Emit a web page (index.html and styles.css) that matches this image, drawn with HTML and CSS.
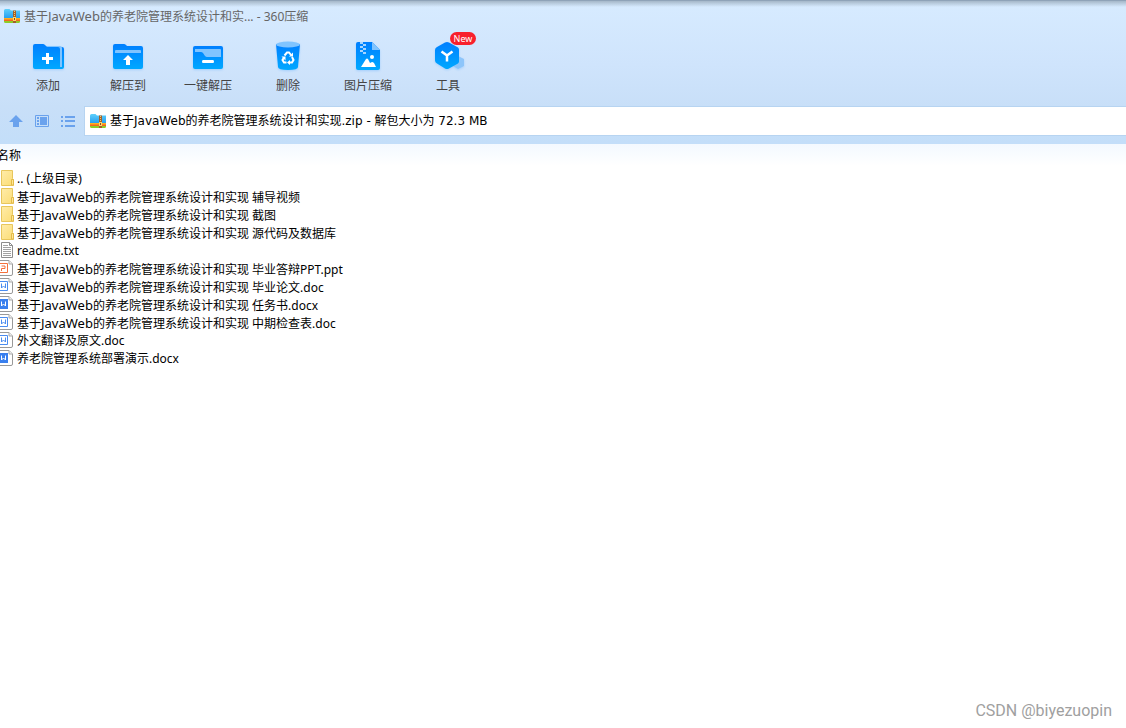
FILE: index.html
```html
<!DOCTYPE html>
<html lang="zh-CN">
<head>
  <meta charset="UTF-8">
  <meta name="viewport" content="width=device-width, initial-scale=1.0">
  <title>360压缩</title>
  <link rel="stylesheet" href="styles.css">
</head>
<body>
  <!-- Shared icons -->
  <svg class="defs" width="0" height="0" aria-hidden="true">
    <defs>
      <linearGradient id="blue" x1="0" y1="0" x2="0" y2="1">
        <stop offset="0" stop-color="#007fff"/>
        <stop offset="1" stop-color="#00a8ff"/>
      </linearGradient>
      <linearGradient id="folderBlue" x1="0" y1="0" x2="0" y2="1">
        <stop offset="0" stop-color="#5fd0fb"/>
        <stop offset="1" stop-color="#239cf0"/>
      </linearGradient>
      <linearGradient id="folderYellow" x1="0" y1="0" x2="1" y2="1">
        <stop offset="0" stop-color="#ffecaa"/>
        <stop offset="1" stop-color="#fbdc74"/>
      </linearGradient>
      <symbol id="zip" viewBox="0 0 16 16">
        <path d="M0 2.500q0-1.500 1.500-1.500h4l1.500 1.500h9v8H0z" fill="url(#folderBlue)"/>
        <path d="M0 10h16v2H0z" fill="#ffb01f"/>
        <path d="M0 11.500h16v1.500H0z" fill="#f26522"/>
        <path d="M0 13h16v.500q0 1.500-1.500 1.500h-13Q0 15 0 13.500z" fill="#8ccc28"/>
        <path d="M9 2.500h3V15H9z" fill="#a0602a"/>
        <path d="M10 3h1v1h-1zm0 2h1v1h-1zm0 2h1v1h-1z" fill="#f6c46a"/>
        <path d="M9 9h3v4H9z" fill="#ffd76a"/>
        <path d="M10 10h1v2h-1z" fill="#8b4a1d"/>
      </symbol>
      <symbol id="folder" viewBox="0 0 14 18">
        <path d="M1.500 1.500h11v8l1 1v6h-12z" fill="url(#folderYellow)" stroke="#e8c65c"/>
        <path d="M11.500 16v-5.500h2V16z" fill="#ffe695" stroke="#e3bb48"/>
      </symbol>
      <symbol id="text" viewBox="0 0 14 18">
        <path d="M1.500 1.500h8l3 3v12h-11z" fill="#fff" stroke="#8c8c8c"/>
        <path d="M9.500 1.500v3h3" fill="none" stroke="#8c8c8c"/>
        <path d="M3 4.500h5M3 6.500h8M3 8.500h8M3 10.500h8M3 12.500h8M3 14.500h8" stroke="#a2a2a2"/>
      </symbol>
      <symbol id="page" viewBox="0 0 14 18">
        <path d="M-2 1.500H9l3.500 3.500v10q0 1.500-1.500 1.500H-2z" fill="#fff" stroke="#999"/>
        <path d="M9 1.500V5h3.500" fill="#eee" stroke="#aaa"/>
      </symbol>
      <symbol id="ppt" viewBox="0 0 14 18">
        <use href="#page" width="14" height="18"/>
        <path d="M-1 4.500h8.500v9H-1" fill="#fff" stroke="#f4713c"/>
        <path d="M1.500 12V9.500h3.500V7H1.500" fill="none" stroke="#f4713c"/>
      </symbol>
      <symbol id="doc" viewBox="0 0 14 18">
        <use href="#page" width="14" height="18"/>
        <path d="M-1 4.500h8.500v9H-1" fill="#fff" stroke="#4a8cf0"/>
        <path d="M1.500 6.500V11L3.500 9l2 2V6.500" fill="none" stroke="#4a8cf0"/>
      </symbol>
      <symbol id="docx" viewBox="0 0 14 18">
        <use href="#page" width="14" height="18"/>
        <path d="M-1 4h9v10h-9z" fill="#397fee"/>
        <path d="M1.500 6.500V11L3.500 9l2 2V6.500" fill="none" stroke="#fff"/>
      </symbol>
    </defs>
  </svg>

  <header class="window-head">
    <div class="titlebar">
      <svg class="zip-icon"><use href="#zip"/></svg>
      <h1>基于<span class="latin">JavaWeb</span>的养老院管理系统设计和实... - 360压缩</h1>
    </div>

    <nav class="toolbar">
      <button type="button">
        <svg viewBox="0 0 32 32">
          <path d="M26 6h4q2 0 2 2v18q0 2-2 2h-4z" fill="url(#blue)"/>
          <path d="M14 5h14q2 0 2 2v19h-3V8H14z" fill="#80c4ff"/>
          <path d="M1 5q0-2 2-2h8q1 0 2 1l2 2h11q2 0 2 2v20H3q-2 0-2-2z" fill="url(#blue)"/>
          <path d="M14 12h3v4h4v3h-4v4h-3v-4h-4v-3h4z" fill="#fff"/>
        </svg>
        添加
      </button>
      <button type="button">
        <svg viewBox="0 0 32 32">
          <path d="M1 5q0-2 2-2h9q1 0 2 1l1 1h14q2 0 2 2v19q0 2-2 2H3q-2 0-2-2z" fill="url(#blue)"/>
          <path d="M3 10q0-1 1-1h24q1 0 1 1v2H3z" fill="#80c4ff"/>
          <path d="M16 14l5 5h-3v5h-4v-5h-3z" fill="#fff"/>
        </svg>
        解压到
      </button>
      <button type="button">
        <svg viewBox="0 0 32 32">
          <rect x="1" y="5" width="30" height="23" rx="2" fill="url(#blue)"/>
          <path d="M3 8h25q1 0 1 1v7H15q-1 0-2-1l-2-3q-1-1-2-1H3z" fill="#80c4ff"/>
          <path d="M11 19h10q1 0 1 1.500t-1 1.500H11q-1 0-1-1.500t1-1.500z" fill="#fff"/>
        </svg>
        一键解压
      </button>
      <button type="button">
        <svg viewBox="0 0 32 32">
          <path d="M4 3h24l-2 23q0 3-10 3T6 26z" fill="url(#blue)"/>
          <ellipse cx="16" cy="3.500" rx="12" ry="3" fill="#80c4ff"/>
          <g fill="none" stroke="#fff" stroke-width="2">
            <path d="M12.500 14.500l2.500-3h2l2 2.500"/>
            <path d="M20 16l1.500 3-1.500 2.500h-3"/>
            <path d="M14.500 21.500H12L10.500 19l1.500-2.500"/>
          </g>
          <path d="M21 11.500v4h-4zM18 19v5l-3-2.500zM9.500 15.500h4v4z" fill="#fff"/>
        </svg>
        删除
      </button>
      <button type="button">
        <svg viewBox="0 0 32 32">
          <path d="M4 3q0-2 2-2h14l8 8v18q0 2-2 2H6q-2 0-2-2z" fill="url(#blue)"/>
          <path d="M20 1l8 8h-8z" fill="#80c4ff"/>
          <path d="M8 1h3v2H8zm3 2h3v2h-3zM8 5h3v2H8zm3 2h3v2h-3zM8 9h3v2H8zm3 2h3v2h-3z" fill="#a8d5ff"/>
          <circle cx="20" cy="16" r="2" fill="#fff"/>
          <path d="M9 26l5-8q1-1 2 0l2 4 2-1q1 0 2 1l2 4z" fill="#fff"/>
        </svg>
        图片压缩
      </button>
      <button type="button" class="tools">
        <svg viewBox="0 0 32 32">
          <path d="M26 15l6 3v7l-6 3-5-3v-7z" fill="#8dc5fa"/>
          <path d="M15 1q1 0 2 .500l9 5q1 1 1 2v12q0 1-1 2l-9 5q-2 1-4 0l-8-5q-2-1-2-3V9q0-2 2-3l8-4.500q1-.500 2-.500z" fill="url(#blue)"/>
          <path d="M9.500 10.500l5.500 4 5.500-4M15 14v6.500" fill="none" stroke="#fff" stroke-width="2.500"/>
        </svg>
        工具
        <span class="badge">New</span>
      </button>
    </nav>

    <div class="address-row">
      <button type="button" aria-label="向上">
        <svg viewBox="0 0 16 16"><path d="M8 2l7 7h-4v5H5V9H1z" fill="#6aa2ed"/></svg>
      </button>
      <button type="button" aria-label="预览">
        <svg viewBox="0 0 16 16">
          <path d="M1.500 2.500h13v11h-13z" fill="none" stroke="#6aa2ed"/>
          <path d="M3 4h2v2H3zm0 3h2v2H3zm0 3h2v2H3zM6 4h7v8H6z" fill="#6aa2ed"/>
        </svg>
      </button>
      <button type="button" aria-label="列表">
        <svg viewBox="0 0 16 16"><path d="M1 3h2v2H1zm4 0h10v2H5zM1 7h2v2H1zm4 0h10v2H5zM1 12h2v2H1zm4 0h10v2H5z" fill="#6aa2ed"/></svg>
      </button>
      <label class="address">
        <svg class="zip-icon"><use href="#zip"/></svg>
        <input type="text" aria-label="地址" value="基于JavaWeb的养老院管理系统设计和实现.zip - 解包大小为 72.3 MB">
      </label>
    </div>
  </header>

  <main>
    <table class="files">
      <thead>
        <tr><th>名称</th></tr>
      </thead>
      <tbody>
        <tr><td><svg><use href="#folder"/></svg><span class="name">.. (上级目录)</span></td></tr>
        <tr><td><svg><use href="#folder"/></svg><span class="name">基于<span class="latin">JavaWeb</span>的养老院管理系统设计和实现 辅导视频</span></td></tr>
        <tr><td><svg><use href="#folder"/></svg><span class="name">基于<span class="latin">JavaWeb</span>的养老院管理系统设计和实现 截图</span></td></tr>
        <tr><td><svg><use href="#folder"/></svg><span class="name">基于<span class="latin">JavaWeb</span>的养老院管理系统设计和实现 源代码及数据库</span></td></tr>
        <tr><td><svg><use href="#text"/></svg><span class="name">readme.txt</span></td></tr>
        <tr><td><svg><use href="#ppt"/></svg><span class="name">基于<span class="latin">JavaWeb</span>的养老院管理系统设计和实现 毕业答辩PPT.ppt</span></td></tr>
        <tr><td><svg><use href="#doc"/></svg><span class="name">基于<span class="latin">JavaWeb</span>的养老院管理系统设计和实现 毕业论文.doc</span></td></tr>
        <tr><td><svg><use href="#docx"/></svg><span class="name">基于<span class="latin">JavaWeb</span>的养老院管理系统设计和实现 任务书.docx</span></td></tr>
        <tr><td><svg><use href="#doc"/></svg><span class="name">基于<span class="latin">JavaWeb</span>的养老院管理系统设计和实现 中期检查表.doc</span></td></tr>
        <tr><td><svg><use href="#doc"/></svg><span class="name">外文翻译及原文.doc</span></td></tr>
        <tr><td><svg><use href="#docx"/></svg><span class="name">养老院管理系统部署演示.docx</span></td></tr>
      </tbody>
    </table>
  </main>

  <div class="watermark">CSDN @biyezuopin</div>
</body>
</html>
```

FILE: styles.css
```css
/* Base styles */
* {
  box-sizing: border-box;
}

body {
  margin: 0;
  min-height: 100vh;
  overflow-x: hidden;
  background: #fff;
  color: #000;
  font-family: "Noto Sans", "Noto Sans CJK SC", sans-serif;
  font-size: 12px;
  line-height: 18px;
}

button,
input {
  padding: 0;
  border: none;
  background: none;
  color: inherit;
  font: inherit;
}

button {
  cursor: pointer;
}

svg {
  flex: none;
}

.defs {
  position: absolute;
}

.latin {
  font-size: 13px;
}

.zip-icon {
  width: 16px;
  height: 16px;
}

/* Window head */
.window-head {
  padding-bottom: 8px;
  border-top: 1px solid #8fa3b8;
  background:
    linear-gradient(#a5b7c8, rgba(190, 212, 232, 0) 6px),
    linear-gradient(#d7ebff, #cfe4fc 64px, #c8dff8 106px, #c3def9);
}

.titlebar {
  display: flex;
  align-items: center;
  gap: 4px;
  height: 30px;
  padding-left: 4px;
}

.titlebar h1 {
  margin: 0;
  color: #666;
  font-size: 12px;
  font-weight: normal;
}

/* Toolbar */
.toolbar {
  display: flex;
  height: 75px;
  padding: 10px 8px 0;
}

.toolbar button {
  display: flex;
  flex-direction: column;
  align-items: center;
  gap: 4px;
  width: 80px;
  color: #444;
  white-space: nowrap;
}

.toolbar svg {
  width: 32px;
  height: 32px;
  filter: drop-shadow(0 1px 1px rgba(0, 130, 255, 0.2));
}

.toolbar .tools {
  position: relative;
}

.badge {
  position: absolute;
  top: -9px;
  left: 42px;
  width: 26px;
  height: 13px;
  border-radius: 7px;
  background: #f8202c;
  color: #fff;
  font-size: 9px;
  line-height: 13px;
}

/* Address bar */
.address-row {
  display: flex;
  align-items: center;
  gap: 10px;
  padding-left: 8px;
}

.address-row button {
  width: 16px;
  height: 16px;
}

.address-row button svg {
  display: block;
}

.address {
  display: flex;
  flex: 1;
  align-items: center;
  gap: 4px;
  height: 30px;
  margin-left: -2px;
  padding-left: 5px;
  border: 1px solid #b7d4f1;
  border-right: none;
  background: #fff;
}

.address input {
  flex: 1;
  outline: none;
  font-family: "DejaVu Sans", "Noto Sans CJK SC", sans-serif;
}

/* File list */
.files {
  width: 100%;
  border-collapse: collapse;
}

.files th {
  height: 25px;
  padding: 0 0 2px;
  background: linear-gradient(#f3f9ff, #fff 22px);
  font-weight: normal;
  text-align: left;
  text-indent: -3px;
}

.files td {
  display: flex;
  align-items: center;
  gap: 3px;
  height: 18px;
  padding: 0;
}

.files svg {
  width: 14px;
  height: 18px;
}

.name {
  padding-top: 2px;
  white-space: nowrap;
}

.watermark {
  position: absolute;
  right: 14px;
  bottom: 8px;
  color: #a0a0a0;
  font-family: Roboto, sans-serif;
  font-size: 16px;
}
```
